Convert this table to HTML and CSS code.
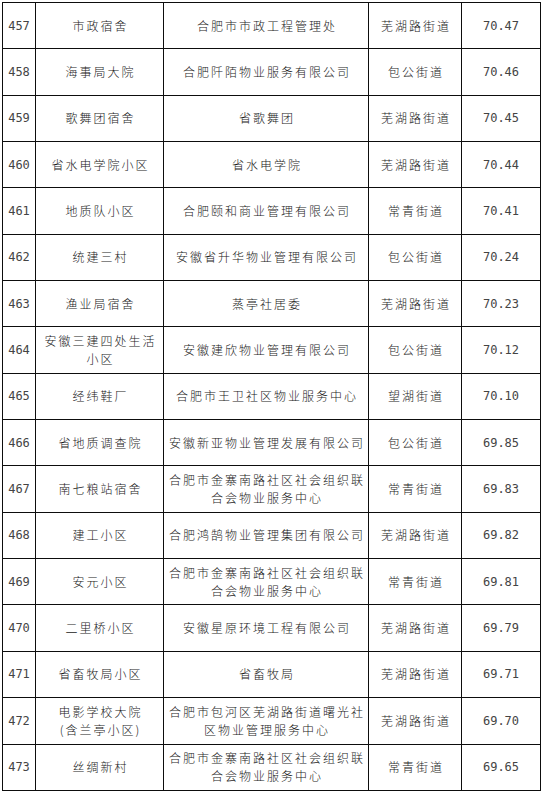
FILE: index.html
```html
<!DOCTYPE html>
<html lang="zh-CN">
<head>
<meta charset="utf-8">
<title>小区物业评分</title>
<link rel="stylesheet" href="styles.css">
</head>
<body>
<table class="grid">
  <colgroup>
    <col class="c-no"><col class="c-name"><col class="c-org"><col class="c-street"><col class="c-score">
  </colgroup>
  <tbody>
    <tr><td class="num">457</td><td>市政宿舍</td><td>合肥市市政工程管理处</td><td>芜湖路街道</td><td class="num">70.47</td></tr>
    <tr><td class="num">458</td><td>海事局大院</td><td>合肥阡陌物业服务有限公司</td><td>包公街道</td><td class="num">70.46</td></tr>
    <tr><td class="num">459</td><td>歌舞团宿舍</td><td>省歌舞团</td><td>芜湖路街道</td><td class="num">70.45</td></tr>
    <tr><td class="num">460</td><td>省水电学院小区</td><td>省水电学院</td><td>芜湖路街道</td><td class="num">70.44</td></tr>
    <tr><td class="num">461</td><td>地质队小区</td><td>合肥颐和商业管理有限公司</td><td>常青街道</td><td class="num">70.41</td></tr>
    <tr><td class="num">462</td><td>统建三村</td><td>安徽省升华物业管理有限公司</td><td>包公街道</td><td class="num">70.24</td></tr>
    <tr><td class="num">463</td><td>渔业局宿舍</td><td>蒸亭社居委</td><td>芜湖路街道</td><td class="num">70.23</td></tr>
    <tr><td class="num">464</td><td>安徽三建四处生活小区</td><td>安徽建欣物业管理有限公司</td><td>包公街道</td><td class="num">70.12</td></tr>
    <tr><td class="num">465</td><td>经纬鞋厂</td><td>合肥市王卫社区物业服务中心</td><td>望湖街道</td><td class="num">70.10</td></tr>
    <tr><td class="num">466</td><td>省地质调查院</td><td>安徽新亚物业管理发展有限公司</td><td>包公街道</td><td class="num">69.85</td></tr>
    <tr><td class="num">467</td><td>南七粮站宿舍</td><td>合肥市金寨南路社区社会组织联合会物业服务中心</td><td>常青街道</td><td class="num">69.83</td></tr>
    <tr><td class="num">468</td><td>建工小区</td><td>合肥鸿鹄物业管理集团有限公司</td><td>芜湖路街道</td><td class="num">69.82</td></tr>
    <tr><td class="num">469</td><td>安元小区</td><td>合肥市金寨南路社区社会组织联合会物业服务中心</td><td>常青街道</td><td class="num">69.81</td></tr>
    <tr><td class="num">470</td><td>二里桥小区</td><td>安徽星原环境工程有限公司</td><td>芜湖路街道</td><td class="num">69.79</td></tr>
    <tr><td class="num">471</td><td>省畜牧局小区</td><td>省畜牧局</td><td>芜湖路街道</td><td class="num">69.71</td></tr>
    <tr><td class="num">472</td><td>电影学校大院<br>(含兰亭小区)</td><td>合肥市包河区芜湖路街道曙光社区物业管理服务中心</td><td>芜湖路街道</td><td class="num">69.70</td></tr>
    <tr><td class="num">473</td><td>丝绸新村</td><td>合肥市金寨南路社区社会组织联合会物业服务中心</td><td>常青街道</td><td class="num">69.65</td></tr>
  </tbody>
</table>
</body>
</html>
```
FILE: styles.css
```css
html, body {
  margin: 0;
  padding: 0;
  background: #ffffff;
}

.grid {
  margin: 2px 0 0 2px;
  border-collapse: collapse;
  table-layout: fixed;
  width: 538px;
  font-family: "Noto Sans CJK SC", "Liberation Sans", sans-serif;
  font-weight: 300;
  font-size: 12px;
  letter-spacing: 2px;
  line-height: 18px;
  color: #1a1a1a;
}

.c-no { width: 33px; }
.c-name { width: 128px; }
.c-org { width: 205px; }
.c-street { width: 93px; }
.c-score { width: 79px; }

.grid tr {
  height: 46.35px;
}

.grid td {
  border: 1px solid #0d0d0d;
  padding: 0 2px 0 4px;
  text-align: center;
  vertical-align: middle;
  overflow: hidden;
}

.grid td.num {
  font-family: "DejaVu Sans Mono", "Liberation Mono", monospace;
  font-weight: 400;
  font-size: 12px;
  letter-spacing: 0;
  color: #444444;
  padding: 0 1px;
}
```
